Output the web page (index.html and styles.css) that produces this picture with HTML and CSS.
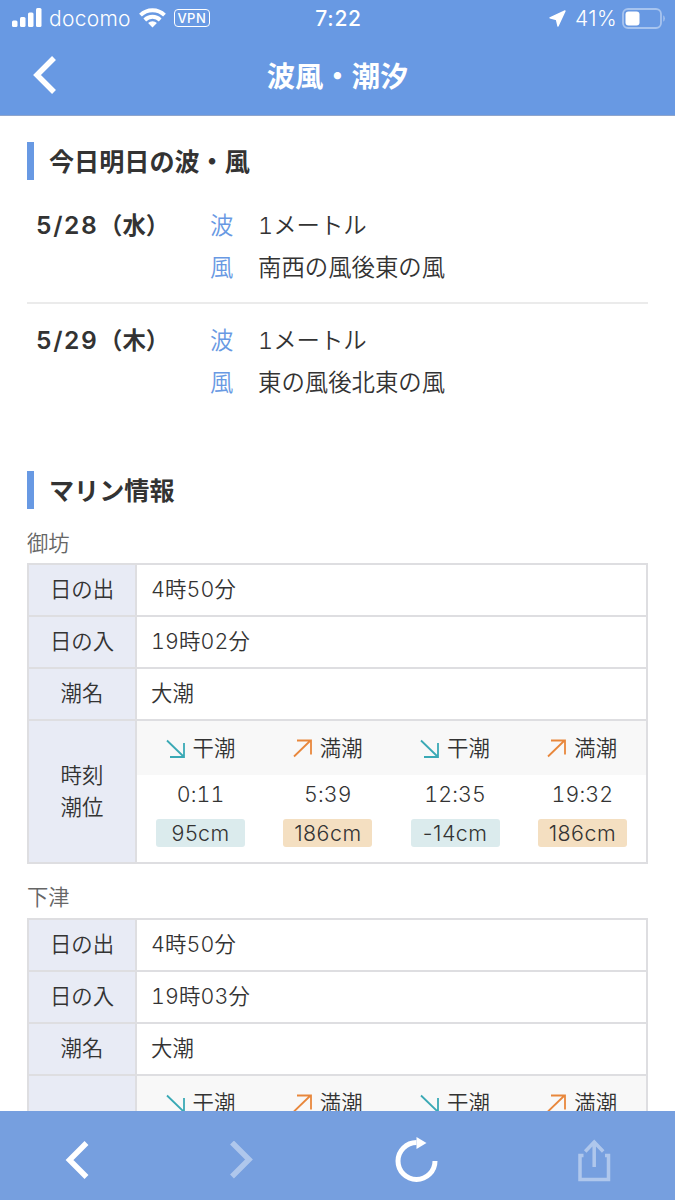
FILE: index.html
```html
<!DOCTYPE html>
<html lang="ja">

<head>
    <meta charset="UTF-8">
    <meta name="viewport" content="width=device-width, initial-scale=1.0">
    <title>波風・潮汐</title>
    <link rel="stylesheet" href="styles.css">
</head>

<body>
    <header class="header">
        <div class="status">
            <div class="status-left">
                <svg class="signal" width="30" height="20" viewBox="0 0 30 20" fill="#fff">
                    <rect x="0" y="12.5" width="5.5" height="6.5" rx="1.5" />
                    <rect x="8" y="9" width="5.5" height="10" rx="1.5" />
                    <rect x="16" y="4.5" width="5.5" height="14.5" rx="1.5" />
                    <rect x="24" y="0" width="5.5" height="19" rx="1.5" />
                </svg>
                <span class="carrier">docomo</span>
                <svg class="wifi" width="27" height="20" viewBox="0 0 27 20">
                    <g fill="none" stroke="#fff" stroke-width="3.9">
                        <path d="M1.500 7.200a17 17 0 0 1 24 0" />
                        <path d="M5.800 12a10.900 10.900 0 0 1 15.400 0" />
                    </g>
                    <path d="M13.5 19.6l-4.4-4.5a6.3 6.3 0 0 1 8.8 0z" fill="#fff" />
                </svg>
                <span class="vpn">VPN</span>
            </div>
            <span class="clock">7:22</span>
            <div class="status-right">
                <svg width="17" height="17" viewBox="0 0 17 17" fill="#fff">
                    <path d="M16 1L9 16 7.500 9.500 1 7.800z" stroke="#fff" stroke-width="1.400" stroke-linejoin="round" />
                </svg>
                <span class="percent">41%</span>
                <svg width="44" height="21" viewBox="0 0 44 21">
                    <rect x="1" y="1" width="38" height="19" rx="5" fill="none" stroke="#fff" stroke-opacity=".42" stroke-width="1.8" />
                    <rect x="3.5" y="3.5" width="14" height="14" rx="3" fill="#fff" />
                    <path d="M41.3 7.2v6.6q1.5-1 1.5-3.3t-1.5-3.3z" fill="#fff" fill-opacity=".45" />
                </svg>
            </div>
        </div>
        <div class="nav">
            <svg class="nav-back" width="24" height="38" viewBox="0 0 24 38">
                <path d="M21 2L4 19l17 17" fill="none" stroke="#fff" stroke-width="5.500" />
            </svg>
            <h1 class="nav-title">波風・潮汐</h1>
        </div>
    </header>

    <main class="main">
        <h2 class="title">今日明日の波・風</h2>
        <div class="day">
            <p class="date"><span>5/28</span>（水）</p>
            <dl class="wave">
                <dt>波</dt>
                <dd>1メートル</dd>
                <dt>風</dt>
                <dd>南西の風後東の風</dd>
            </dl>
        </div>
        <div class="day">
            <p class="date"><span>5/29</span>（木）</p>
            <dl class="wave">
                <dt>波</dt>
                <dd>1メートル</dd>
                <dt>風</dt>
                <dd>東の風後北東の風</dd>
            </dl>
        </div>

        <h2 class="title title-marine">マリン情報</h2>

        <p class="port">御坊</p>
        <table class="marine">
            <tr>
                <th>日の出</th>
                <td>4時50分</td>
            </tr>
            <tr>
                <th>日の入</th>
                <td>19時02分</td>
            </tr>
            <tr>
                <th>潮名</th>
                <td>大潮</td>
            </tr>
            <tr class="tide-row">
                <th>時刻<br>潮位</th>
                <td class="tide">
                    <ul class="tide-head">
                        <li><svg class="low" viewBox="0 0 19 19"><path d="M1 1.500L17.500 17.500M18 4v14H4" /></svg>干潮</li>
                        <li><svg class="high" viewBox="0 0 19 19"><path d="M1 17.500L17.500 1.500M4 1.500h14v14" /></svg>満潮</li>
                        <li><svg class="low" viewBox="0 0 19 19"><path d="M1 1.500L17.500 17.500M18 4v14H4" /></svg>干潮</li>
                        <li><svg class="high" viewBox="0 0 19 19"><path d="M1 17.500L17.500 1.500M4 1.500h14v14" /></svg>満潮</li>
                    </ul>
                    <ul class="tide-body">
                        <li>0:11<span class="cm cm-low">95cm</span></li>
                        <li>5:39<span class="cm cm-high">186cm</span></li>
                        <li>12:35<span class="cm cm-low">-14cm</span></li>
                        <li>19:32<span class="cm cm-high">186cm</span></li>
                    </ul>
                </td>
            </tr>
        </table>

        <p class="port">下津</p>
        <table class="marine">
            <tr>
                <th>日の出</th>
                <td>4時50分</td>
            </tr>
            <tr>
                <th>日の入</th>
                <td>19時03分</td>
            </tr>
            <tr>
                <th>潮名</th>
                <td>大潮</td>
            </tr>
            <tr class="tide-row">
                <th></th>
                <td class="tide">
                    <ul class="tide-head">
                        <li><svg class="low" viewBox="0 0 19 19"><path d="M1 1.500L17.500 17.500M18 4v14H4" /></svg>干潮</li>
                        <li><svg class="high" viewBox="0 0 19 19"><path d="M1 17.500L17.500 1.500M4 1.500h14v14" /></svg>満潮</li>
                        <li><svg class="low" viewBox="0 0 19 19"><path d="M1 1.500L17.500 17.500M18 4v14H4" /></svg>干潮</li>
                        <li><svg class="high" viewBox="0 0 19 19"><path d="M1 17.500L17.500 1.500M4 1.500h14v14" /></svg>満潮</li>
                    </ul>
                </td>
            </tr>
        </table>
    </main>

    <footer class="toolbar">
        <svg width="24" height="38" viewBox="0 0 24 38">
            <path d="M21.500 2L4.500 19l17 17" fill="none" stroke="#fff" stroke-width="5.500" />
        </svg>
        <svg class="off" width="24" height="38" viewBox="0 0 24 38">
            <path d="M3 1.500L20 18.500 3 35.500" fill="none" stroke="#fff" stroke-width="5.500" />
        </svg>
        <svg width="44" height="46" viewBox="0 0 44 46">
            <path d="M41 24A18.500 18.500 0 1 1 22.500 5.500" fill="none" stroke="#fff" stroke-width="5" />
            <path d="M22.500 0l10 6-10 6z" fill="#fff" />
        </svg>
        <svg class="off" width="34" height="44" viewBox="0 0 34 44" fill="none" stroke="#fff" stroke-width="3.500">
            <path d="M5.500 17.500H2v24h28.500v-24H27M16.200 3v26M7.200 13.500L16.200 4l9 9.500" />
        </svg>
    </footer>
</body>

</html>
```
FILE: styles.css
```css
* {
    box-sizing: border-box;
}

body,
h1,
h2,
p,
ul,
li,
dl,
dt,
dd {
    margin: 0;
    padding: 0;
    list-style: none;
}

body {
    display: flex;
    flex-direction: column;
    height: 1200px;
    overflow: hidden;
    background: #fff;
    color: #333;
    font-family: Inter, "Noto Sans CJK JP", sans-serif;
    font-weight: 350;
    font-feature-settings: "calt" 0;
}

svg {
    display: block;
    flex: none;
}

.header {
    height: 116px;
    flex: none;
    background: #6899e3;
    border-bottom: 1px solid #8fa5cc;
    color: #fff;
}

.status {
    display: grid;
    grid-template-columns: 1fr auto 1fr;
    align-items: center;
    height: 36px;
    padding: 0 9px 0 12px;
}

.status-left,
.status-right {
    display: flex;
    align-items: center;
}

.status-right {
    justify-content: flex-end;
}

.signal {
    margin-right: 7px;
}

.carrier {
    font-size: 21px;
    letter-spacing: 0.3px;
}

.wifi {
    margin: 0 8px;
}

.vpn {
    width: 36px;
    height: 18px;
    border: 1.5px solid #fff;
    border-radius: 4px;
    font-size: 13px;
    font-weight: 500;
    letter-spacing: 0.5px;
    line-height: 16px;
    text-align: center;
}

.clock {
    margin-right: 1px;
    font-size: 21px;
    font-weight: 500;
    letter-spacing: 0.8px;
}

.percent {
    margin: 0 5px 0 9px;
    font-size: 21px;
    letter-spacing: 0.4px;
}

.nav {
    display: grid;
    grid-template-columns: 1fr auto 1fr;
    align-items: center;
    height: 78px;
    padding: 0 33px;
}

.nav-title {
    padding-top: 3px;
    font-size: 28.3px;
    font-weight: 700;
    line-height: 40px;
}

.main {
    flex: 1;
    min-height: 0;
    overflow: hidden;
    padding: 26px 27px 0;
}

.title {
    height: 38px;
    padding-left: 15px;
    border-left: 7px solid #6899e3;
    font-size: 25.1px;
    font-weight: 700;
    line-height: 40px;
}

.day {
    display: flex;
    height: 115px;
    padding: 16px 0 0 9px;
    font-size: 23.4px;
    font-feature-settings: "calt" 0, "tnum" 1;
    line-height: 41.5px;
}

.title + .day {
    height: 124px;
    padding-top: 25px;
    border-bottom: 2px solid #ebebeb;
}

.date {
    width: 174px;
    font-weight: 600;
}

.date span {
    margin-right: 1px;
    font-size: 24.5px;
    letter-spacing: 1.3px;
}

.wave {
    display: grid;
    grid-template-columns: 48px auto;
    align-content: start;
}

.wave dt {
    color: #6899e3;
}

.title-marine {
    margin-top: 52px;
}

.port {
    height: 54px;
    padding-top: 18px;
    color: #666;
    font-size: 21.3px;
    line-height: 32px;
}

.marine + .port {
    padding-top: 17px;
}

.marine {
    width: 621px;
    border-collapse: collapse;
    table-layout: fixed;
    font-size: 21.4px;
    font-feature-settings: "calt" 0, "tnum" 1;
    line-height: 32px;
}

.marine th,
.marine td {
    height: 52px;
    padding: 0 0 2px;
    border: 2px solid #dedee1;
    font-weight: 350;
}

.marine th {
    width: 108px;
    background: #e8ebf5;
}

.marine td {
    padding-left: 14px;
    letter-spacing: 0.15px;
}

.marine .tide-row th,
.marine .tide-row td {
    height: 143px;
}

.marine .tide {
    padding: 0;
    vertical-align: top;
}

.tide-head,
.tide-body {
    display: grid;
    grid-template-columns: repeat(4, 1fr);
}

.tide-head {
    height: 54px;
    background: #f8f8f8;
}

.tide-head li {
    display: flex;
    align-items: center;
    justify-content: center;
    gap: 8px;
    padding-bottom: 1px;
}

.tide-head svg {
    width: 19px;
    height: 19px;
    margin-top: 2px;
    fill: none;
    stroke-width: 1.8;
}

.low {
    stroke: #3aa9b5;
}

.high {
    stroke: #e8873c;
}

.tide-body {
    padding-top: 3px;
}

.tide-body li {
    text-align: center;
}

.cm {
    display: block;
    width: 89px;
    height: 28px;
    margin: 9px auto 0;
    border-radius: 3px;
    font-feature-settings: "calt" 0;
    letter-spacing: 0.5px;
    line-height: 28px;
}

.cm-low {
    background: #dbebed;
}

.cm-high {
    background: #f4dfc1;
}

.toolbar {
    display: flex;
    flex: none;
    align-items: center;
    height: 89px;
    padding: 8px 63px 0 65px;
    justify-content: space-between;
    background: #769fdf;
}

.off {
    opacity: 0.42;
}
```
